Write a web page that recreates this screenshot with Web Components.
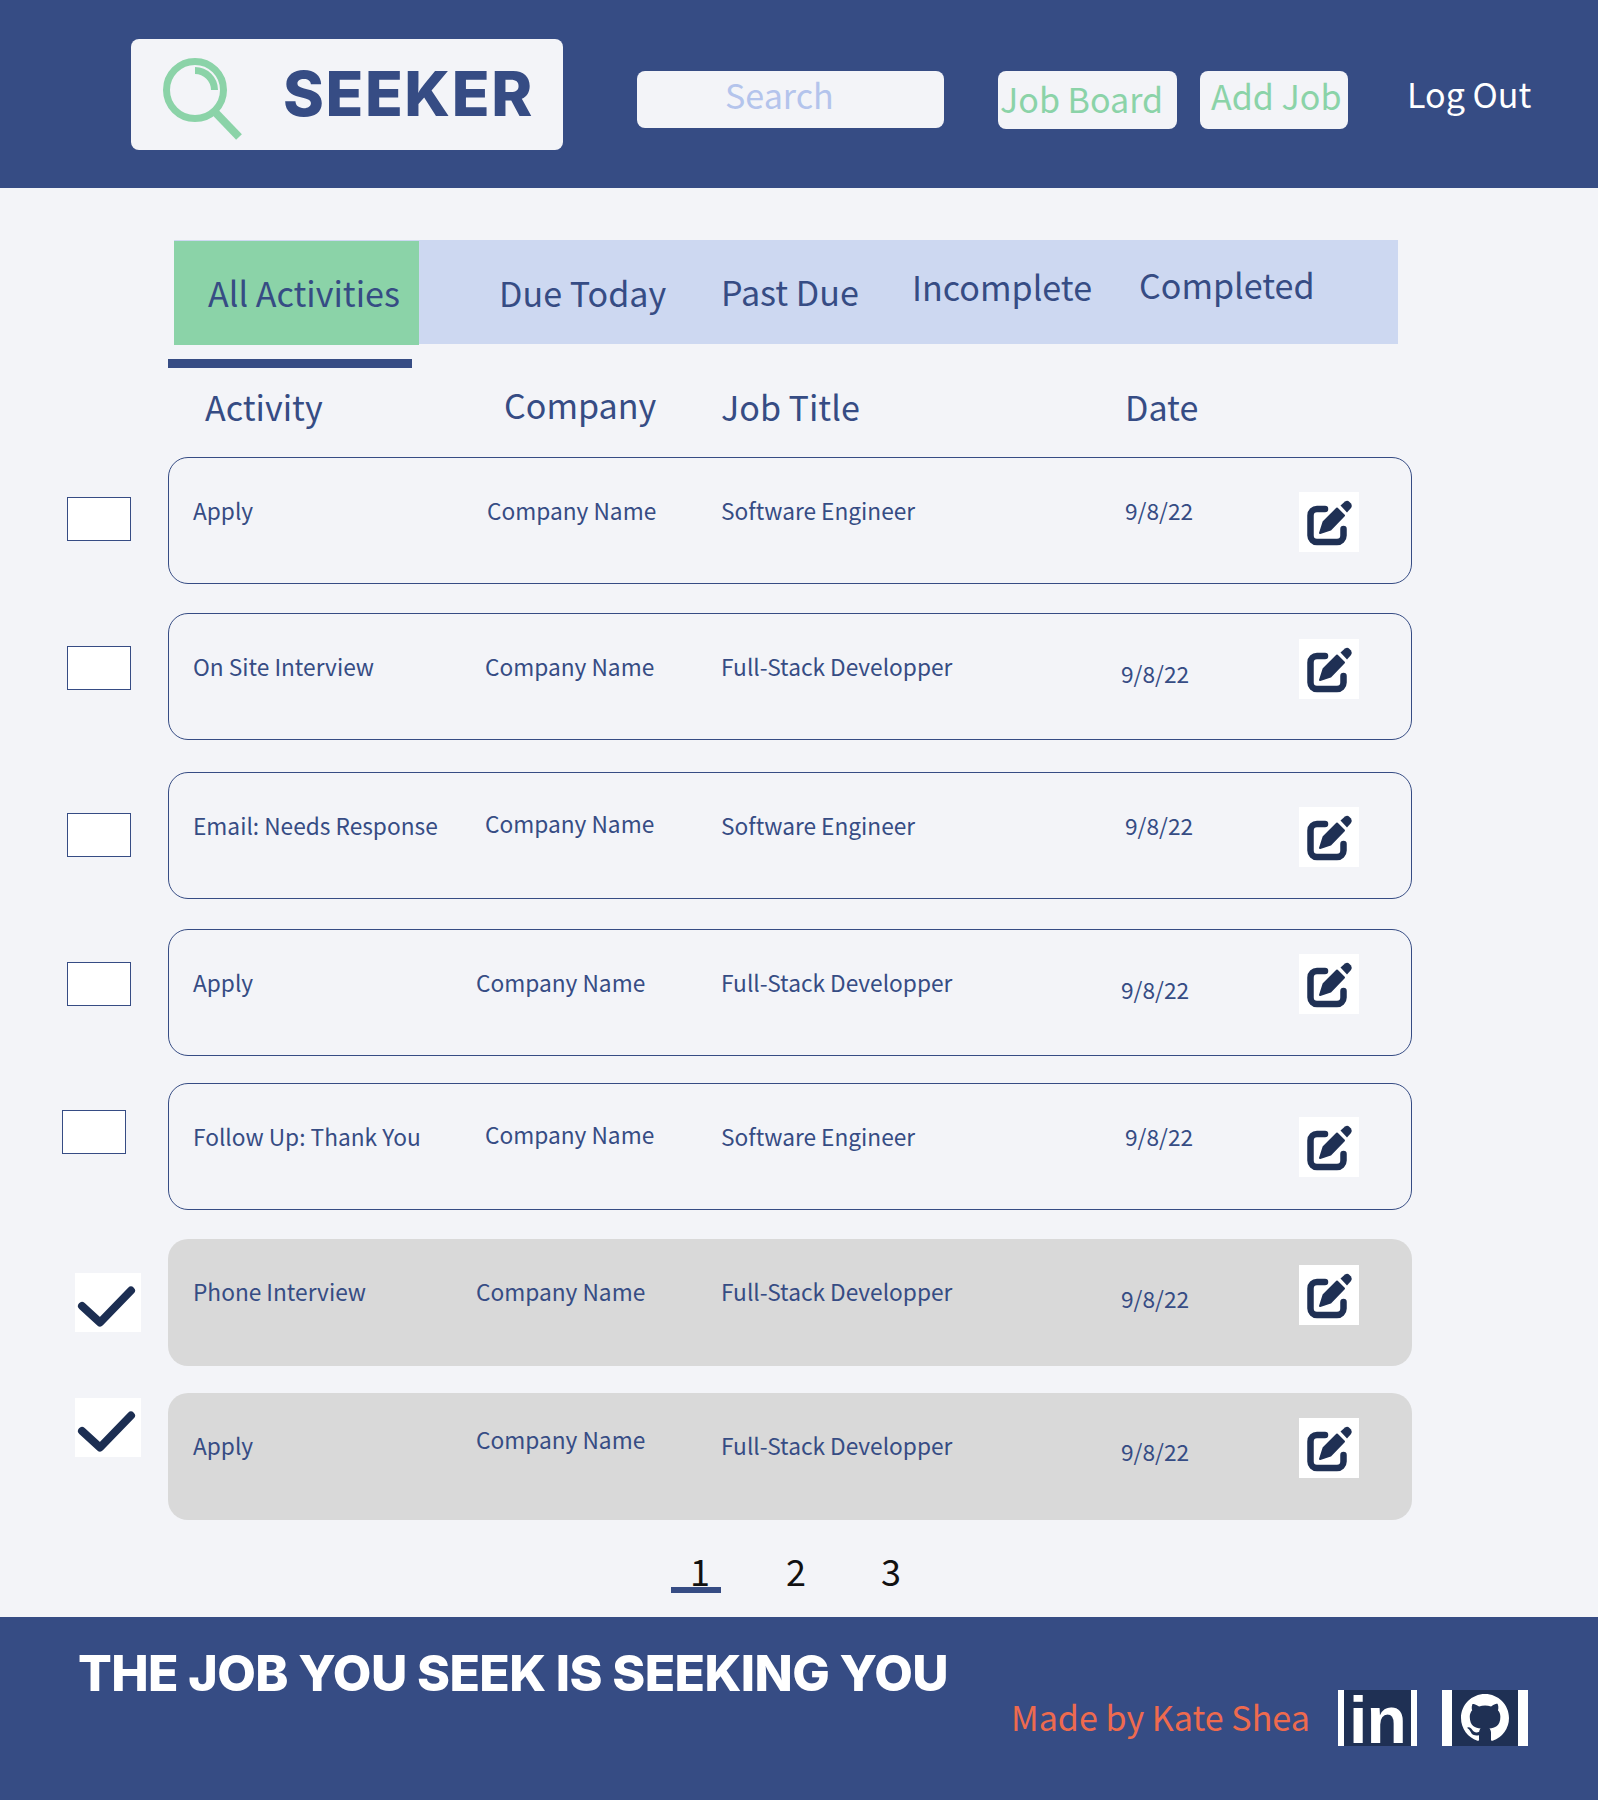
<!DOCTYPE html>
<html lang="en">
<head>
<meta charset="utf-8">
<title>Seeker</title>
<style>
  body {
    margin: 0;
    background: #f3f4f8;
    color: #364c84;
    font-family: "Noto Sans CJK SC", "Liberation Sans", sans-serif;
  }
</style>
</head>
<body>
<seeker-page></seeker-page>

<script>
// Small helper so every element below sets its shadow root the same way
class SeekerElement extends HTMLElement {
    constructor() {
        super();
        this.shadow = this.attachShadow({mode: 'open'});
    }
}

class SeekerLogo extends SeekerElement {
    connectedCallback() {
        this.shadow.innerHTML = `
            <style>
                :host {
                    display: flex;
                    align-items: center;
                    box-sizing: border-box;
                    width: 432px;
                    height: 111px;
                    margin-top: 39px;
                    background: #f3f4f8;
                    border-radius: 8px;
                }
                svg { width: 110px; height: 111px; flex: none; margin-left: 22px; }
                span {
                    margin: -2px 0 0 20px;
                    font: 800 62px/1 Inter, "Liberation Sans", sans-serif;
                    letter-spacing: 1.6px;
                    color: #364c84;
                }
            </style>
            <svg viewBox="0 0 110 111" fill="none" stroke="#8bd3a8">
                <circle cx="42" cy="51" r="28.5" stroke-width="7"/>
                <path d="M42 31.500 A19.500 19.500 0 0 1 61.500 51" stroke-width="7"/>
                <path d="M62 73 L86 98" stroke-width="8"/>
            </svg>
            <span>SEEKER</span>
        `;
    }
}

class NavPill extends SeekerElement {
    connectedCallback() {
        this.shadow.innerHTML = `
            <style>
                :host {
                    display: flex;
                    align-items: center;
                    box-sizing: border-box;
                    height: 58px;
                    margin-top: 71px;
                    padding-left: var(--pad, 0);
                    background: #f3f4f8;
                    border-radius: 8px;
                    font-size: 34.1px;
                    line-height: 1;
                    color: #8bd3a8;
                    white-space: nowrap;
                }
                span { position: relative; top: var(--nudge, 0); }
            </style>
            <span><slot></slot></span>
        `;
    }
}

class SeekerHeader extends SeekerElement {
    connectedCallback() {
        this.shadow.innerHTML = `
            <style>
                :host {
                    display: flex;
                    align-items: flex-start;
                    height: 188px;
                    padding-left: 131px;
                    background: #364c84;
                }
                .logout {
                    margin: 73px 0 0 59px;
                    font-size: 34.1px;
                    line-height: 40px;
                    color: #fff;
                }
            </style>
            <seeker-logo></seeker-logo>
            <nav-pill style="width:307px;height:57px;margin-left:74px;--pad:88px;color:#b4c4ec;--nudge:-5px">Search</nav-pill>
            <nav-pill style="width:179px;margin-left:54px;--pad:2px;--nudge:-2px">Job Board</nav-pill>
            <nav-pill style="width:148px;margin-left:23px;--pad:11px;--nudge:-5px">Add Job</nav-pill>
            <div class="logout">Log Out</div>
        `;
    }
}

class TabBar extends SeekerElement {
    connectedCallback() {
        this.shadow.innerHTML = `
            <style>
                :host {
                    display: grid;
                    grid-template-columns: 245px 302px 191px 227px 1fr;
                    align-items: start;
                    width: 1224px;
                    height: 104px;
                    margin: 52px 0 0 174px;
                    background: #cdd8f1;
                    font-size: 34.1px;
                    line-height: 40px;
                    white-space: nowrap;
                }
                div { margin-top: var(--y); }
                .active {
                    box-sizing: border-box;
                    height: 104px;
                    margin: 1px 0 0;
                    padding: 31px 0 0 34px;
                    background: #8bd3a8;
                }
            </style>
            <div class="active">All Activities</div>
            <div style="--y:32px;margin-left:80px">Due Today</div>
            <div style="--y:31px">Past Due</div>
            <div style="--y:26px">Incomplete</div>
            <div style="--y:24px">Completed</div>
        `;
    }
}

class ColumnHeads extends SeekerElement {
    connectedCallback() {
        this.shadow.innerHTML = `
            <style>
                :host {
                    display: grid;
                    grid-template-columns: 299px 217px 404px 1fr;
                    height: 89px;
                    padding-left: 205px;
                    font-size: 34.1px;
                    line-height: 40px;
                }
                div { margin-top: 18px; }
            </style>
            <div>Activity</div>
            <div style="margin-top:16px">Company</div>
            <div>Job Title</div>
            <div>Date</div>
        `;
    }
}

class EditIcon extends SeekerElement {
    connectedCallback() {
        this.shadow.innerHTML = `
            <style>
                :host { display: block; width: 60px; height: 60px; background: #fff; }
                svg { display: block; width: 60px; height: 60px; }
            </style>
            <svg viewBox="0 0 60 60">
                <path d="M26 17 H18 a6.500 6.500 0 0 0 -6.500 6.500 V43.500 a6.500 6.500 0 0 0 6.500 6.500 H38 a6.500 6.500 0 0 0 6.500 -6.500 V37"
                      fill="none" stroke="#1f3054" stroke-width="6.500" stroke-linecap="round"/>
                <path d="M21 41 L24.500 30 L38 16.500 L45 23.500 L31.500 37.500 Z" fill="#1f3054" stroke="#1f3054" stroke-width="2" stroke-linejoin="round"/>
                <path d="M41.500 13.500 L46 9.500 Q48.500 8 50.500 10 L52 11.500 Q53.500 14 52 16 L48 20.500 Z" fill="#1f3054"/>
            </svg>
        `;
    }
}

class TaskCheck extends SeekerElement {
    connectedCallback() {
        const done = this.hasAttribute('checked');
        this.shadow.innerHTML = `
            <style>
                :host {
                    display: block;
                    box-sizing: border-box;
                    width: ${done ? 66 : 64}px;
                    height: ${done ? 59 : 44}px;
                    background: #fff;
                    ${done ? '' : 'border: 1px solid #364c84;'}
                }
                svg { display: block; width: 66px; height: 59px; }
            </style>
            ${done ? `<svg viewBox="0 0 66 59"><path d="M7 33 L25 49.500 L56 17.500" fill="none" stroke="#1c2e52" stroke-width="8" stroke-linecap="round" stroke-linejoin="round"/></svg>` : ''}
        `;
    }
}

class ActivityRow extends SeekerElement {
    connectedCallback() {
        const done = this.hasAttribute('done');
        this.shadow.innerHTML = `
            <style>
                :host {
                    display: flex;
                    height: 127px;
                    margin-top: var(--gap, 0);
                    font-size: 22.7px;
                    line-height: 30px;
                }
                .gutter { flex: none; width: 168px; }
                task-check { margin-left: var(--box-x, 67px); margin-top: var(--box-y, 40px); }
                .card {
                    box-sizing: border-box;
                    flex: none;
                    width: 1244px;
                    height: 127px;
                    padding-left: 25px;
                    display: grid;
                    grid-template-columns: 283px 245px 399px 179px 1fr;
                    align-items: start;
                    border-radius: 20px;
                    ${done ? 'background: #d9d9d9;' : 'border: 1px solid #364c84; padding-left: 24px;'}
                }
                .cell { white-space: nowrap; margin-top: var(--y, 38px); }
                .company { margin-left: var(--company-x, 11px); margin-top: var(--company-y, 38px); }
                .date { margin-left: var(--date-x, 5px); margin-top: var(--date-y, 38px); }
                edit-icon { margin-top: var(--icon-y, 34px); }
            </style>
            <div class="gutter"><task-check ${done ? 'checked' : ''}></task-check></div>
            <div class="card">
                <div class="cell"><slot name="activity"></slot></div>
                <div class="cell company"><slot name="company"></slot></div>
                <div class="cell"><slot name="title"></slot></div>
                <div class="cell date"><slot name="date"></slot></div>
                <edit-icon></edit-icon>
            </div>
        `;
    }
}

class PageNav extends SeekerElement {
    connectedCallback() {
        this.shadow.innerHTML = `
            <style>
                :host {
                    display: flex;
                    height: 97px;
                    padding-left: 671px;
                    font-size: 36px;
                    line-height: 32px;
                    color: #111;
                }
                div { flex: none; margin-top: 34px; }
                .current {
                    box-sizing: border-box;
                    width: 50px;
                    height: 39px;
                    padding-left: 19px;
                    border-bottom: 6px solid #364c84;
                    margin-right: 65px;
                }
                .plain { width: 95px; }
            </style>
            <div class="current">1</div>
            <div class="plain">2</div>
            <div class="plain">3</div>
        `;
    }
}

class SocialLinks extends SeekerElement {
    connectedCallback() {
        this.shadow.innerHTML = `
            <style>
                :host { display: flex; gap: 25px; margin-top: 73px; margin-left: 28px; }
                .tile {
                    display: flex;
                    justify-content: center;
                    box-sizing: border-box;
                    height: 56px;
                    background: #1f3054;
                    color: #fff;
                }
                .in {
                    width: 79px;
                    border-left: 6px solid #fff;
                    border-right: 6px solid #fff;
                    font: 700 66px/60px "Liberation Sans", sans-serif;
                    letter-spacing: -1px;
                }
                .gh {
                    width: 86px;
                    align-items: center;
                    border-left: 10px solid #fff;
                    border-right: 10px solid #fff;
                }
                svg { width: 48px; height: 48px; display: block; }
            </style>
            <div class="tile in">in</div>
            <div class="tile gh">
                <svg viewBox="0 0 16 16" fill="#fff"><path fill-rule="evenodd" d="M8 0C3.58 0 0 3.58 0 8c0 3.54 2.29 6.53 5.47 7.59.4.07.55-.17.55-.38 0-.19-.01-.82-.01-1.49-2.01.37-2.53-.49-2.69-.94-.09-.23-.48-.94-.82-1.13-.28-.15-.68-.52-.01-.53.63-.01 1.08.58 1.23.82.72 1.21 1.87.87 2.33.66.07-.52.28-.87.51-1.07-1.78-.2-3.64-.89-3.64-3.95 0-.87.31-1.59.82-2.15-.08-.2-.36-1.02.08-2.12 0 0 .67-.21 2.2.82.64-.18 1.32-.27 2-.27.68 0 1.36.09 2 .27 1.53-1.04 2.2-.82 2.2-.82.44 1.1.16 1.92.08 2.12.51.56.82 1.27.82 2.15 0 3.07-1.87 3.75-3.65 3.95.29.25.54.73.54 1.48 0 1.07-.01 1.93-.01 2.2 0 .21.15.46.55.38A8.013 8.013 0 0016 8c0-4.42-3.58-8-8-8z"/></svg>
            </div>
        `;
    }
}

class SeekerFooter extends SeekerElement {
    connectedCallback() {
        this.shadow.innerHTML = `
            <style>
                :host {
                    display: flex;
                    align-items: flex-start;
                    height: 183px;
                    padding-left: 78px;
                    background: #364c84;
                    white-space: nowrap;
                }
                h2 {
                    flex: none;
                    width: 933px;
                    margin: 26px 0 0;
                    font: 800 50px/60px Inter, "Liberation Sans", sans-serif;
                    letter-spacing: -0.6px;
                    color: #fff;
                }
                .credit {
                    flex: none;
                    margin-top: 79px;
                    font-size: 34.1px;
                    line-height: 40px;
                    color: #ee6a4e;
                }
            </style>
            <h2>THE JOB YOU SEEK IS SEEKING YOU</h2>
            <div class="credit">Made by Kate Shea</div>
            <social-links></social-links>
        `;
    }
}

class SeekerPage extends SeekerElement {
    connectedCallback() {
        const rows = [
            ['Apply', 'Company Name', 'Software Engineer', '9/8/22', '--company-x:11px;--date-x:5px;--box-y:40px'],
            ['On Site Interview', 'Company Name', 'Full-Stack Developper', '9/8/22', '--gap:29px;--company-x:9px;--date-x:1px;--date-y:45px;--box-y:33px;--icon-y:25px'],
            ['Email: Needs Response', 'Company Name', 'Software Engineer', '9/8/22', '--gap:32px;--company-x:9px;--company-y:36px;--y:38px;--date-y:38px;--box-y:41px;--icon-y:34px'],
            ['Apply', 'Company Name', 'Full-Stack Developper', '9/8/22', '--gap:30px;--company-x:0px;--date-x:1px;--date-y:45px;--box-y:33px;--icon-y:24px'],
            ['Follow Up: Thank You', 'Company Name', 'Software Engineer', '9/8/22', '--gap:27px;--company-x:9px;--company-y:36px;--box-x:62px;--box-y:27px;--icon-y:33px'],
            ['Phone Interview', 'Company Name', 'Full-Stack Developper', '9/8/22', '--gap:29px;--company-x:0px;--date-x:1px;--date-y:45px;--box-x:75px;--box-y:34px;--icon-y:26px'],
            ['Apply', 'Company Name', 'Full-Stack Developper', '9/8/22', '--gap:27px;--company-x:0px;--company-y:32px;--date-x:1px;--date-y:44px;--box-x:75px;--box-y:5px;--icon-y:25px'],
        ];
        const rowMarkup = rows.map((r, i) => `
            <activity-row ${i > 4 ? 'done' : ''} style="${r[4]}">
                <span slot="activity">${r[0]}</span>
                <span slot="company">${r[1]}</span>
                <span slot="title">${r[2]}</span>
                <span slot="date">${r[3]}</span>
            </activity-row>`).join('');

        this.shadow.innerHTML = `
            <style>
                :host { display: block; height: 1800px; overflow: hidden; }
                .underline { width: 244px; height: 9px; margin: 15px 0 0 168px; background: #364c84; }
            </style>
            <seeker-header></seeker-header>
            <tab-bar></tab-bar>
            <div class="underline"></div>
            <column-heads></column-heads>
            ${rowMarkup}
            <page-nav></page-nav>
            <seeker-footer></seeker-footer>
        `;
    }
}

customElements.define('seeker-logo', SeekerLogo);
customElements.define('nav-pill', NavPill);
customElements.define('seeker-header', SeekerHeader);
customElements.define('tab-bar', TabBar);
customElements.define('column-heads', ColumnHeads);
customElements.define('edit-icon', EditIcon);
customElements.define('task-check', TaskCheck);
customElements.define('activity-row', ActivityRow);
customElements.define('page-nav', PageNav);
customElements.define('social-links', SocialLinks);
customElements.define('seeker-footer', SeekerFooter);
customElements.define('seeker-page', SeekerPage);
</script>
</body>
</html>
